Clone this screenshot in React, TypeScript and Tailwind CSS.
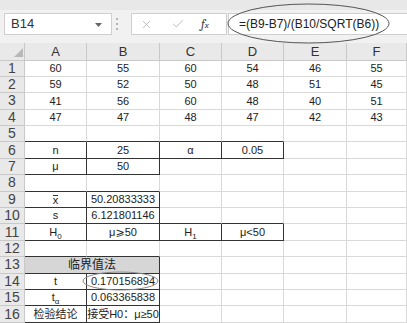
import { X, Check } from 'lucide-react';

const COLS = [62, 73, 62, 62, 63, 60];
const LETTERS = ['A', 'B', 'C', 'D', 'E', 'F'];

type Cell = React.ReactNode;

const sub = (base: string, s: string) => (
  <span>
    {base}
    <span className="relative top-[3px] text-[8px]">{s}</span>
  </span>
);

// row -> cells (A..F)
const DATA: Record<number, Cell[]> = {
  1: ['60', '55', '60', '54', '46', '55'],
  2: ['59', '52', '50', '48', '51', '45'],
  3: ['41', '56', '60', '48', '40', '51'],
  4: ['47', '47', '48', '47', '42', '43'],
  6: ['n', '25', 'α', '0.05'],
  7: ['μ', '50'],
  9: [<span className="relative top-[1px] border-t border-[#333] leading-[9px]">x</span>, '50.20833333'],
  10: ['s', '6.121801146'],
  11: [sub('H', '0'), 'μ⩾50', sub('H', '1'), 'μ<50'],
  14: ['t', '0.170156894'],
  15: [sub('t', 'α'), '0.063365838'],
  16: ['检验结论', '接受H0：μ≥50'],
};

const BOXED: Record<number, number[]> = {
  6: [0, 1, 2, 3],
  7: [0, 1],
  9: [0, 1],
  10: [0, 1],
  11: [0, 1, 2, 3],
  13: [0, 1],
  14: [0, 1],
  15: [0, 1],
  16: [0, 1],
};

const boxed = (r: number, c: number) => (BOXED[r] || []).includes(c);

function Row({ r }: { r: number }) {
  const cells = DATA[r] || [];
  return (
    <div className="flex h-[16.4px]">
      <div className="flex w-[25px] shrink-0 items-center justify-center border-r border-b border-[#c9c9c9] bg-[#e9e9e9] text-[14px] text-[#444]">
        {r}
      </div>
      {r === 13 ? (
        <>
          <div className="flex w-[135px] shrink-0 items-center justify-center border-r border-b border-[#333] bg-[#d6d6d6] text-[12px] text-[#222]">
            临界值法
          </div>
          {COLS.slice(2).map((w, i) => {
            const c = i + 2;
            const right = boxed(r, c) || boxed(r, c + 1);
            const bottom = boxed(r, c) || boxed(r + 1, c);
            return (
              <div
                key={c}
                style={{ width: w }}
                className={`shrink-0 border-r border-b ${right ? 'border-r-[#333]' : 'border-r-[#d9d9d9]'} ${bottom ? 'border-b-[#333]' : 'border-b-[#d9d9d9]'}`}
              />
            );
          })}
        </>
      ) : (
        COLS.map((w, c) => {
          const right = boxed(r, c) || boxed(r, c + 1) || (r === 14 && c === 1);
          const bottom = boxed(r, c) || boxed(r + 1, c);
          return (
            <div
              key={c}
              style={{ width: w }}
              className={`flex shrink-0 items-center justify-center overflow-hidden whitespace-nowrap border-r border-b text-[11px] text-[#222] ${right ? 'border-r-[#333]' : 'border-r-[#d9d9d9]'} ${bottom ? 'border-b-[#333]' : 'border-b-[#d9d9d9]'}`}
            >
              {cells[c]}
            </div>
          );
        })
      )}
    </div>
  );
}

export default function App() {
  return (
    <div
      className="relative h-[323px] w-[407px] overflow-hidden bg-white"
      style={{ fontFamily: '"Liberation Sans", "Noto Sans CJK SC", "DejaVu Sans", sans-serif' }}
    >
      {/* Formula bar */}
      <div className="relative h-[43px] border-t-[10px] border-[#e8e8e8] bg-[#f1f1f1]">
        <div className="absolute top-[3px] left-[4px] flex h-[22px] w-[108px] items-center border border-[#cfcfcf] bg-white pl-[6px] text-[13px] text-[#333]">
          B14
          <svg className="absolute top-[9px] left-[90px]" width="7" height="4" viewBox="0 0 7 4">
            <polygon points="0,0 7,0 3.5,4" fill="#666" />
          </svg>
        </div>
        <div className="absolute top-[8px] left-[116px] flex flex-col gap-[3px]">
          <span className="h-[2px] w-[2px] bg-[#b5b5b5]" />
          <span className="h-[2px] w-[2px] bg-[#b5b5b5]" />
          <span className="h-[2px] w-[2px] bg-[#b5b5b5]" />
        </div>
        <div className="absolute top-[3px] left-[131px] flex h-[22px] w-[96px] items-center border border-[#cfcfcf] bg-white">
          <X size={13} strokeWidth={1.3} className="ml-[8px] text-[#a8a8a8]" />
          <Check size={14} strokeWidth={1.3} className="ml-[18px] text-[#a8a8a8]" />
          <span className="ml-[16px] font-serif text-[13px] italic text-[#444]">
            f<span className="text-[9px]">x</span>
          </span>
        </div>
        <div className="absolute top-[3px] left-[228px] flex h-[22px] w-[190px] items-center border border-[#cfcfcf] bg-white pl-[10px] text-[12px] text-[#222]">
          =(B9-B7)/(B10/SQRT(B6))
        </div>
      </div>

      {/* Column header */}
      <div className="flex h-[17.5px]">
        <div className="relative w-[25px] shrink-0 border-r border-b border-[#c9c9c9] bg-[#e9e9e9]">
          <svg className="absolute top-[5px] left-[14px]" width="9" height="9" viewBox="0 0 9 9">
            <polygon points="9,0 9,9 0,9" fill="#b8b8b8" />
          </svg>
        </div>
        {COLS.map((w, c) => (
          <div
            key={c}
            style={{ width: w }}
            className="flex shrink-0 items-center justify-center border-r border-b border-[#c9c9c9] bg-[#e9e9e9] text-[13px] text-[#333]"
          >
            {LETTERS[c]}
          </div>
        ))}
      </div>

      {Array.from({ length: 16 }, (_, i) => (
        <Row key={i} r={i + 1} />
      ))}

      {/* annotation ellipses */}
      <svg className="pointer-events-none absolute top-0 left-0" width="407" height="323">
        <ellipse cx="308.5" cy="23.5" rx="80.5" ry="19.5" fill="none" stroke="#555" strokeWidth="1" />
        <ellipse cx="120.5" cy="281" rx="37.5" ry="9" fill="none" stroke="#8a8a8a" strokeWidth="1" />
      </svg>
    </div>
  );
}
